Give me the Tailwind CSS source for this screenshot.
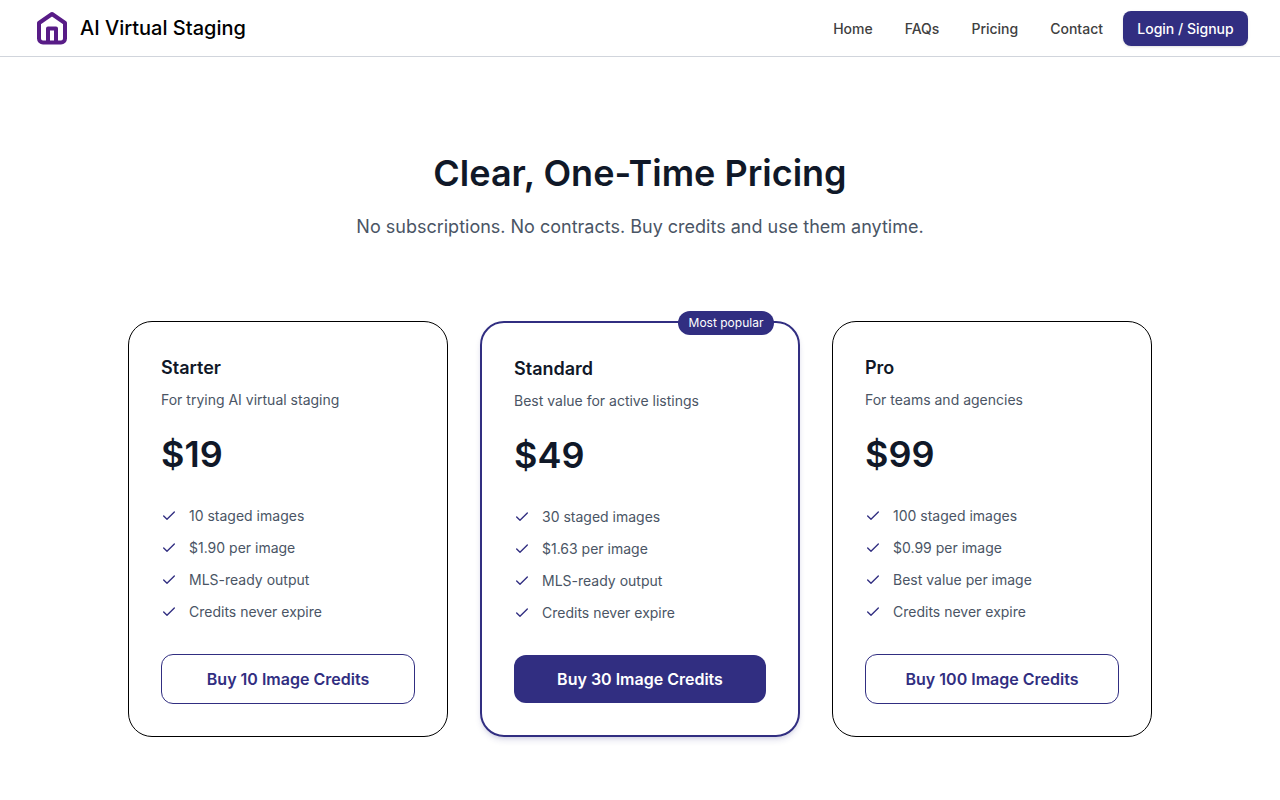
<!DOCTYPE html>
<html lang="en">
<head>
    <meta charset="UTF-8">
    <meta name="viewport" content="width=device-width, initial-scale=1.0">
    <title>AI Virtual Staging - Pricing</title>
    <script src="https://cdn.jsdelivr.net/npm/@tailwindcss/browser@4"></script>
</head>
<body class="bg-white font-['Inter',sans-serif] text-gray-900">
    <svg class="hidden">
        <symbol id="check" viewBox="0 0 24 24" fill="none" stroke="currentColor" stroke-width="2" stroke-linecap="round" stroke-linejoin="round">
            <path d="M20 6 9 17l-5-5" />
        </symbol>
    </svg>

    <header class="border-b border-gray-300">
        <div class="flex h-14 items-center justify-between px-8">
            <a href="#" class="flex items-center gap-2 text-xl font-medium text-black">
                <svg class="size-10" viewBox="0 0 40 40" fill="none" stroke="#581c87" stroke-width="4" stroke-linejoin="round">
                    <path d="M7 15 20 6l13 9v15.500a4 4 0 0 1-4 4H11a4 4 0 0 1-4-4z" />
                    <path d="M16 34V20.500h8V34" />
                </svg>
                AI Virtual Staging
            </a>
            <nav class="flex items-center gap-8 pt-px text-sm font-medium text-neutral-700">
                <a href="#">Home</a>
                <a href="#">FAQs</a>
                <a href="#pricing">Pricing</a>
                <a href="#">Contact</a>
                <button class="-ml-3 h-[35px] w-[125px] rounded-lg bg-[#312e81] text-white shadow-sm">Login / Signup</button>
            </nav>
        </div>
    </header>

    <main id="pricing" class="mx-auto max-w-5xl py-24">
        <div class="text-center">
            <h1 class="text-4xl font-semibold">Clear, One-Time Pricing</h1>
            <p class="mt-5 text-lg text-gray-600">No subscriptions. No contracts. Buy credits and use them anytime.</p>
        </div>

        <div class="mt-20 grid grid-cols-3 gap-8">
            <section class="rounded-3xl border border-black p-8">
                <h2 class="text-lg font-semibold">Starter</h2>
                <p class="mt-2 text-sm text-gray-600">For trying AI virtual staging</p>
                <p class="mt-6 text-4xl font-semibold">$19</p>
                <ul class="mt-8 space-y-3 text-sm text-gray-600">
                    <li class="flex items-center gap-3"><svg class="size-4 text-[#312e81]"><use href="#check" /></svg>10 staged images</li>
                    <li class="flex items-center gap-3"><svg class="size-4 text-[#312e81]"><use href="#check" /></svg>$1.90 per image</li>
                    <li class="flex items-center gap-3"><svg class="size-4 text-[#312e81]"><use href="#check" /></svg>MLS-ready output</li>
                    <li class="flex items-center gap-3"><svg class="size-4 text-[#312e81]"><use href="#check" /></svg>Credits never expire</li>
                </ul>
                <button class="mt-8 w-full rounded-xl border border-[#312e81] py-3 font-semibold text-[#312e81]">Buy 10 Image Credits</button>
            </section>

            <section class="relative rounded-3xl border-2 border-[#312e81] p-8 shadow-md shadow-[#312e81]/15">
                <span class="absolute -top-3 right-6 w-24 rounded-full bg-[#312e81] py-1 text-center text-xs text-white">Most popular</span>
                <h2 class="text-lg font-semibold">Standard</h2>
                <p class="mt-2 text-sm text-gray-600">Best value for active listings</p>
                <p class="mt-6 text-4xl font-semibold">$49</p>
                <ul class="mt-8 space-y-3 text-sm text-gray-600">
                    <li class="flex items-center gap-3"><svg class="size-4 text-[#312e81]"><use href="#check" /></svg>30 staged images</li>
                    <li class="flex items-center gap-3"><svg class="size-4 text-[#312e81]"><use href="#check" /></svg>$1.63 per image</li>
                    <li class="flex items-center gap-3"><svg class="size-4 text-[#312e81]"><use href="#check" /></svg>MLS-ready output</li>
                    <li class="flex items-center gap-3"><svg class="size-4 text-[#312e81]"><use href="#check" /></svg>Credits never expire</li>
                </ul>
                <button class="mt-8 w-full rounded-xl bg-[#312e81] py-3 font-semibold text-white">Buy 30 Image Credits</button>
            </section>

            <section class="rounded-3xl border border-black p-8">
                <h2 class="text-lg font-semibold">Pro</h2>
                <p class="mt-2 text-sm text-gray-600">For teams and agencies</p>
                <p class="mt-6 text-4xl font-semibold">$99</p>
                <ul class="mt-8 space-y-3 text-sm text-gray-600">
                    <li class="flex items-center gap-3"><svg class="size-4 text-[#312e81]"><use href="#check" /></svg>100 staged images</li>
                    <li class="flex items-center gap-3"><svg class="size-4 text-[#312e81]"><use href="#check" /></svg>$0.99 per image</li>
                    <li class="flex items-center gap-3"><svg class="size-4 text-[#312e81]"><use href="#check" /></svg>Best value per image</li>
                    <li class="flex items-center gap-3"><svg class="size-4 text-[#312e81]"><use href="#check" /></svg>Credits never expire</li>
                </ul>
                <button class="mt-8 w-full rounded-xl border border-[#312e81] py-3 font-semibold text-[#312e81]">Buy 100 Image Credits</button>
            </section>
        </div>
    </main>
</body>
</html>
